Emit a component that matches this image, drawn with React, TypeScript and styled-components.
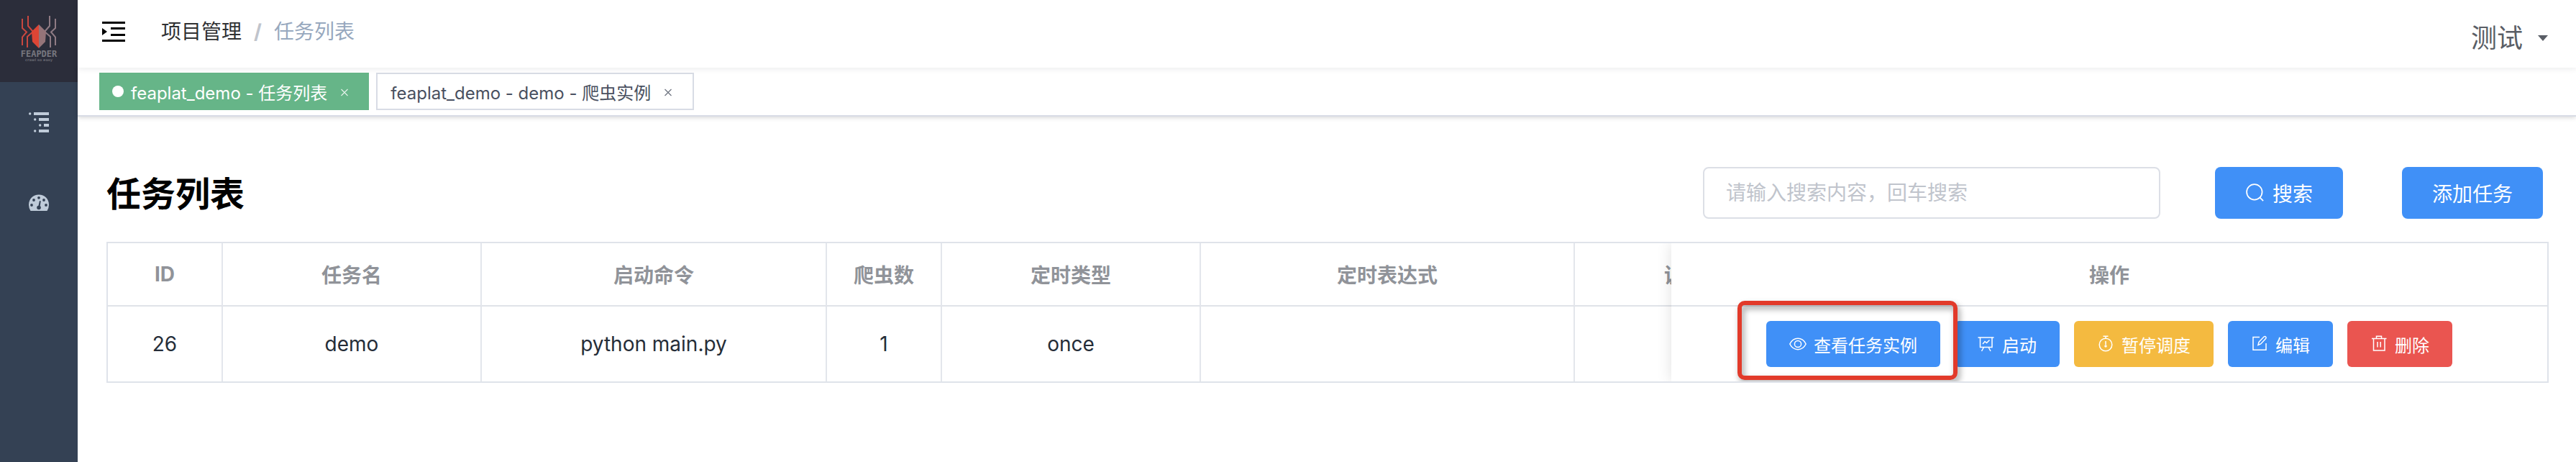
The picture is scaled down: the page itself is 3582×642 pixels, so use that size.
import React from "react";
import styled, { createGlobalStyle, css } from "styled-components";

const Global = createGlobalStyle`
  * { box-sizing: border-box; }
  body { margin: 0; background: #fff; font-family: Inter, "Noto Sans CJK SC", sans-serif; color: #303133; }
  button, input { font-family: inherit; }
`;

const Shell = styled.div`display: flex; min-height: 100vh;`;
const Sidebar = styled.nav`flex: 0 0 108px; background: #344154; display: flex; flex-direction: column;`;
const LogoLink = styled.a`display: flex; height: 114px; background: #2b2d3a; justify-content: center; align-items: center; svg { display: block; }`;
const SideLink = styled.a`display: flex; height: 112px; justify-content: center; align-items: center; color: #bfcbd9;`;
const Main = styled.div`flex: 1; min-width: 0;`;
const Navbar = styled.header`
  position: relative; z-index: 1; height: 94px; padding: 0 38px 0 34px; display: flex; align-items: center;
  background: #fff; box-shadow: 0 2px 8px rgba(0, 21, 41, 0.08);
`;
const Toggle = styled.button`border: 0; padding: 0; margin: 0 50px 6px 0; background: none; display: flex; color: #000;`;
const Crumbs = styled.nav`display: flex; gap: 17px; font-size: 28px; line-height: 40px; margin-bottom: 6px; flex: 1;`;
const Crumb = styled.a`color: #303133; text-decoration: none;`;
const Current = styled.span`color: #97a8be;`;
const Slash = styled.span`color: #c0c4cc; font-weight: 700;`;
const User = styled.button`
  border: 0; padding: 0; background: none; display: flex; align-items: center; gap: 20px; margin-top: 12px;
  font-size: 36px; line-height: 48px; color: #5a5e66;
`;
const Tags = styled.div`
  height: 68px; padding: 0 30px; display: flex; align-items: center; gap: 10px; background: #fff;
  border-bottom: 2px solid #d8dce5; box-shadow: 0 2px 6px rgba(0, 0, 0, 0.12), 0 0 6px rgba(0, 0, 0, 0.04);
`;
const Tag = styled.div<{ $active?: boolean }>`
  height: 52px; padding: 0 ${p => (p.$active ? "26px 0 16px" : "28px 0 18px")}; display: flex; align-items: center;
  font-size: 24px; border: 2px solid ${p => (p.$active ? "#66b588" : "#d8dce5")};
  background: ${p => (p.$active ? "#66b588" : "#fff")}; color: ${p => (p.$active ? "#fff" : "#495060")};
  a { color: inherit; text-decoration: none; }
`;
const Dot = styled.span`width: 16px; height: 16px; border-radius: 50%; background: #fff; margin-right: 10px;`;
const Close = styled.button`border: 0; padding: 2px 0 0; margin-left: 18px; background: none; color: inherit; display: flex; opacity: 0.8;`;

const Content = styled.main`padding: 70px 38px 0 40px;`;
const Head = styled.div`display: flex; align-items: center; height: 72px; margin-bottom: 32px; padding-right: 8px;`;
const Title = styled.h1`margin: 0; padding-top: 4px; flex: 1; font-size: 48px; line-height: 72px; font-weight: 700; color: #000;`;
const Search = styled.input`
  width: 636px; height: 72px; margin-right: 76px; padding: 0 30px; font-size: 28px; color: #606266;
  border: 2px solid #dcdfe6; border-radius: 8px; background: #fff;
  &::placeholder { color: #c0c4cc; opacity: 1; }
`;
const tones = { primary: "#4090f7", warning: "#f4ba40", danger: "#ea5550" };
const Button = styled.button<{ $tone?: keyof typeof tones; $small?: boolean }>`
  display: flex; align-items: center; gap: 10px; border: 0; color: #fff; white-space: nowrap;
  background: ${p => tones[p.$tone ?? "primary"]};
  ${p => p.$small
    ? css`height: 64px; padding: 0 32px; font-size: 24px; border-radius: 6px;`
    : css`height: 72px; padding: 0 42px; font-size: 28px; border-radius: 8px;`}
`;
const AddButton = styled(Button)`margin-left: 82px;`;

const TableBox = styled.div`position: relative; overflow: hidden; border: 2px solid #dfe3ea; display: flex;`;
const Table = styled.table`
  border-collapse: separate; border-spacing: 0; table-layout: fixed; font-size: 28px; color: #252d38;
  th, td { padding: 0; text-align: center; border-right: 2px solid #e3e6ec; }
  th { height: 88px; color: #909399; font-weight: 700; border-bottom: 2px solid #e0e3e8; }
  td { height: 104px; }
`;
const ScrollPart = styled.div`flex: 1; min-width: 0; overflow: hidden; table { width: 2402px; }`;
const FixedPart = styled.div`
  flex: 0 0 1218px; position: relative; background: #fff; box-shadow: 0 0 20px rgba(0, 0, 0, 0.12);
  table { width: 100%; }
  th, td { border-right: 0; }
`;
const Actions = styled.div`display: flex; justify-content: center; gap: 20px;`;
const Highlight = styled.div`
  position: relative; display: flex;
  &::after {
    content: ""; position: absolute; inset: -28px -24px -18px -40px; border: 6px solid #e23a2a; border-radius: 10px;
    filter: drop-shadow(3px 5px 4px rgba(0, 0, 0, 0.4)); pointer-events: none; z-index: 2;
  }
`;

const Icon = ({ size = 24, children }: { size?: number; children: React.ReactNode }) => (
  <svg width={size} height={size} viewBox="0 0 24 24" fill="none" stroke="currentColor" strokeWidth="1.5" aria-hidden="true">{children}</svg>
);
const SearchIcon = () => <Icon size={28}><circle cx="11" cy="11" r="9.2" /><path d="M17.500 17.500l4 4" /></Icon>;
const EyeIcon = () => <Icon><path d="M.8 12C6 1.800 18 1.800 23.200 12C18 22.200 6 22.200 .8 12Z" /><circle cx="12" cy="12" r="4.600" /></Icon>;
const BoardIcon = () => <Icon><path d="M.5 3h22M3.500 3v13.500h16.500V3M8.500 16.500l-3 5.500M15 16.500l3 5.500M7 12l3-3.500 2.500 2 4-4" /></Icon>;
const TimerIcon = () => <Icon><circle cx="12" cy="13" r="8.800" /><path d="M8.500 1.200h7M12 1.200v3M12 8v5" /><circle cx="12" cy="15" r="1" /></Icon>;
const EditIcon = () => <Icon><path d="M12 2.500H3v17.800h18V11" /><path d="M10 13.500l1-4.200 7-7.300q1.400-1 2.600 0t0 2.600l-7 7.300z" /></Icon>;
const TrashIcon = () => <Icon><path d="M2 4.500h20.500M8.500 4.500V1.200h7v3.300M4.500 4.500V21h15.500V4.500M10 9v7.500M14.200 9v7.500" /></Icon>;

const CloseIcon = () => (
  <svg width="12" height="12" viewBox="0 0 12 12" fill="none" stroke="currentColor" strokeWidth="1.2"><path d="M1.500 2l9 9M10.500 2l-9 9" /></svg>
);

const Logo = () => (
  <svg width="56" height="72" viewBox="0 0 56 72" fill="none" aria-hidden="true">
    <g stroke="#c9473f" strokeWidth="2"><path d="M13 1v14l7 8-8 7v15M5 5v13l6 5.500-6 7V42" /></g>
    <g stroke="#8f7b84" strokeWidth="2"><path d="M43 1v14l-7 8 8 7v15M51 5v13l-6 5.500 6 7V42" /></g>
    <path d="M28 13L18 23l1 14 9 9z" fill="#dd4535" />
    <path d="M28 13l10 10-1 14-9 9z" fill="#957479" />
    <text x="28" y="58" fontFamily="DejaVu Sans Mono" fontWeight="700" fontSize="12" textAnchor="middle" fill="#77777f">FEAPDER</text>
    <text x="28" y="64" fontFamily="DejaVu Sans" fontWeight="700" fontSize="5" textAnchor="middle" fill="#66666f">crawl so easy</text>
  </svg>
);

const columns = [
  { label: "ID", width: 160, value: "26" },
  { label: "任务名", width: 360, value: "demo" },
  { label: "启动命令", width: 480, value: "python main.py" },
  { label: "爬虫数", width: 160, value: "1" },
  { label: "定时类型", width: 360, value: "once" },
  { label: "定时表达式", width: 520, value: "" },
  { label: "调度状态", width: 362, value: "" },
];

export default function App() {
  return (
    <>
      <Global />
      <Shell>
        <Sidebar aria-label="主菜单">
          <LogoLink href="#" aria-label="feapder"><Logo /></LogoLink>
          <SideLink href="#" aria-label="任务">
            <svg width="28" height="30" viewBox="0 0 28 30" fill="currentColor">
              <path d="M7 1h21v4H7zM14 9h14v4H14zM21 17h7v4h-7zM14 25h14v4H14z" />
              <circle cx="1.7" cy="3" r="1.7" /><circle cx="8.7" cy="11" r="1.7" /><circle cx="15.7" cy="19" r="1.7" /><circle cx="8.7" cy="27" r="1.7" />
            </svg>
          </SideLink>
          <SideLink href="#" aria-label="仪表盘">
            <svg width="28" height="24" viewBox="0 0 28 24">
              <path d="M2.500 23Q0 19 0 14.500C0 6.500 6 .5 14 .5s14 6 14 14q0 4.500-2.500 8.500z" fill="currentColor" />
              <g fill="#344154"><circle cx="4" cy="15" r="1.9" /><circle cx="7" cy="8" r="1.9" /><circle cx="14" cy="4.8" r="1.9" /><circle cx="21" cy="8" r="1.9" /><circle cx="24" cy="15" r="1.9" /><circle cx="14" cy="18.5" r="2.8" /><path d="M13 18l2-9 1.800.4-1.500 9z" /></g>
            </svg>
          </SideLink>
        </Sidebar>
        <Main>
          <Navbar>
            <Toggle aria-label="展开菜单">
              <svg width="32" height="28" viewBox="0 0 32 28" fill="currentColor"><path d="M0 0h32v3H0zM12 8h20v3H12zM12 17h20v3H12zM0 25h32v3H0zM0 9l7 5-7 5z" /></svg>
            </Toggle>
            <Crumbs aria-label="面包屑"><Crumb href="#">项目管理</Crumb><Slash>/</Slash><Current>任务列表</Current></Crumbs>
            <User>测试<svg width="16" height="10" viewBox="0 0 16 10" fill="currentColor"><path d="M1 1h14L8 9z" /></svg></User>
          </Navbar>
          <Tags>
            <Tag $active><Dot /><a href="#">feaplat_demo - 任务列表</a><Close aria-label="关闭"><CloseIcon /></Close></Tag>
            <Tag><a href="#">feaplat_demo - demo - 爬虫实例</a><Close aria-label="关闭"><CloseIcon /></Close></Tag>
          </Tags>
          <Content>
            <Head>
              <Title>任务列表</Title>
              <Search aria-label="搜索" placeholder="请输入搜索内容，回车搜索" />
              <Button><SearchIcon />搜索</Button>
              <AddButton>添加任务</AddButton>
            </Head>
            <TableBox>
              <ScrollPart>
                <Table>
                  <colgroup>{columns.map(c => <col key={c.label} width={c.width} />)}</colgroup>
                  <thead><tr>{columns.map(c => <th key={c.label}>{c.label}</th>)}</tr></thead>
                  <tbody><tr>{columns.map(c => <td key={c.label}>{c.value}</td>)}</tr></tbody>
                </Table>
              </ScrollPart>
              <FixedPart>
                <Table>
                  <thead><tr><th>操作</th></tr></thead>
                  <tbody><tr><td>
                    <Actions>
                      <Highlight><Button $small><EyeIcon />查看任务实例</Button></Highlight>
                      <Button $small><BoardIcon />启动</Button>
                      <Button $small $tone="warning"><TimerIcon />暂停调度</Button>
                      <Button $small><EditIcon />编辑</Button>
                      <Button $small $tone="danger"><TrashIcon />删除</Button>
                    </Actions>
                  </td></tr></tbody>
                </Table>
              </FixedPart>
            </TableBox>
          </Content>
        </Main>
      </Shell>
    </>
  );
}
